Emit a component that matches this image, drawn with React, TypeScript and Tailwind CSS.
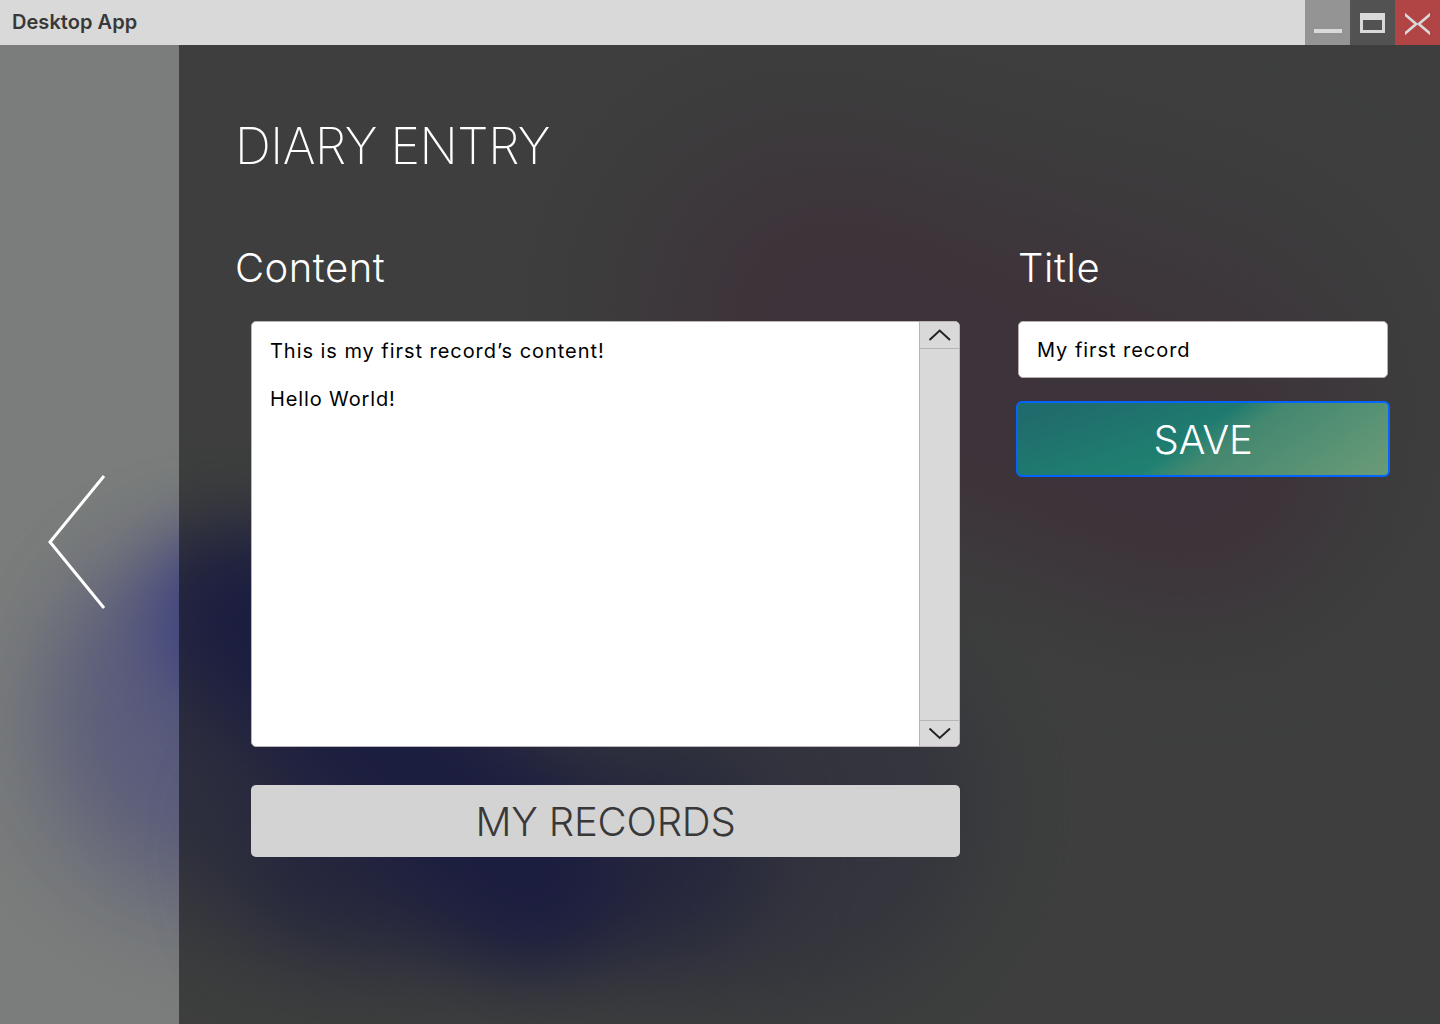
import React from "react";

function Backdrop() {
  return (
    <div className="absolute inset-0 overflow-hidden bg-[#7a7d7b]">
      <div className="absolute left-[590px] top-[150px] h-[400px] w-[800px] rotate-[14deg] rounded-full bg-[#7a7078] blur-[65px]" />
      <div className="absolute left-[690px] top-[265px] h-[260px] w-[650px] rotate-[22deg] rounded-full bg-[#7b6674] blur-[50px]" />
      <div className="absolute left-[30px] top-[580px] h-[380px] w-[950px] rotate-[7deg] rounded-full bg-[#66687a] blur-[52px]" />
      <div className="absolute left-[75px] top-[545px] h-[310px] w-[320px] rounded-full bg-[#595b7b] blur-[42px]" />
      <div className="absolute left-[240px] top-[760px] h-[190px] w-[520px] rounded-full bg-[#4a4d79] blur-[42px]" />
      <div className="absolute left-[115px] top-[662px] h-[170px] w-[550px] rotate-[42deg] rounded-full bg-[#383c80] blur-[36px]" />
    </div>
  );
}

function TitleBar() {
  return (
    <header className="relative flex h-[45px] shrink-0 items-center bg-[#d9d9d9]">
      <h1 className="flex-1 pb-px pl-3 text-[20px] leading-[43px] font-semibold tracking-[0.05px] text-[#383838]">Desktop App</h1>
      <button aria-label="Minimize" className="flex size-[45px] items-end justify-center bg-[#949494] pb-3">
        <span className="h-1 w-7 bg-[#d9d9d9]" />
      </button>
      <button aria-label="Maximize" className="flex size-[45px] items-center justify-center bg-[#525252]">
        <span className="h-5 w-[25px] border-[3px] border-t-[7px] border-[#d9d9d9]" />
      </button>
      <button aria-label="Close" className="flex size-[45px] items-center justify-center bg-[#b14545]">
        <svg className="mt-[3px] h-[22px] w-[25px]" viewBox="0 0 25 22" fill="none" stroke="#d9d9d9" strokeWidth="2.6">
          <path d="M-1 0.6L11.2 11L-1 21.4M26 0.6L13.8 11L26 21.4" />
        </svg>
      </button>
    </header>
  );
}

function ScrollButton({ down = false }: { down?: boolean }) {
  return (
    <button
      aria-label={down ? "Scroll down" : "Scroll up"}
      className={down ? "flex h-[25px] items-center justify-center" : "flex h-[26px] items-center justify-center"}
    >
      <svg className="mr-px h-3 w-[23px]" viewBox="0 0 23 12" fill="none" stroke="#222" strokeWidth="2">
        <path d={down ? "M1.5 0.5L11.7 10L22 0.5" : "M1.5 11L11.7 1.5L22 11"} />
      </svg>
    </button>
  );
}

export default function App() {
  return (
    <div className="relative flex h-[1024px] w-[1440px] flex-col overflow-hidden font-['Inter',sans-serif]">
      <Backdrop />
      <TitleBar />
      <div className="relative flex flex-1">
        <aside className="w-[179px] shrink-0 pt-[429px] pl-[47px]">
          <button aria-label="Back" className="block">
            <svg className="h-[136px] w-[60px]" viewBox="0 0 60 136" fill="none" stroke="#fff" strokeWidth="3">
              <path d="M57 2L3 68L57 134" />
            </svg>
          </button>
        </aside>
        <main className="flex-1 bg-black/50 pt-[71px] pl-[56px]">
          <h2 className="text-[50px] leading-[60px] font-extralight tracking-[-0.45px] text-white">DIARY ENTRY</h2>
          <div className="mt-[67px] flex gap-[58px]">
            <section className="w-[725px]">
              <h3 className="text-[40px] leading-[50px] font-light tracking-[0.5px] text-white">Content</h3>
              <div className="mt-[28px] ml-[16px] flex h-[426px] w-[709px] overflow-hidden rounded-[5px] border border-[#b9b4b7] bg-white">
                <div className="flex-1 pt-[17px] pl-[18px] text-[20px] leading-6 tracking-[0.95px] text-black">
                  <p>This is my first record’s content!</p>
                  <p className="mt-6 tracking-[0.88px]">Hello World!</p>
                </div>
                <div className="flex w-10 flex-col border-l border-[#b5b5b5] bg-[#d9d9d9]">
                  <ScrollButton />
                  <div className="flex-1 border-y border-[#b5b5b5]" />
                  <ScrollButton down />
                </div>
              </div>
              <button className="mt-[38px] ml-[16px] h-[72px] w-[709px] rounded-[5px] bg-[#d3d3d3] pt-px text-[40px] leading-[72px] font-light tracking-[-0.2px] text-[#383838]">
                MY RECORDS
              </button>
            </section>
            <section className="w-[374px]">
              <h3 className="text-[40px] leading-[50px] font-light tracking-[0.6px] text-white">Title</h3>
              <div className="mt-[28px] flex h-[57px] w-[370px] items-center rounded-[5px] border border-[#b9adb2] bg-white pl-[18px] text-[20px] tracking-[0.95px] text-black">
                My first record
              </div>
              <button className="mt-[23px] -ml-[2px] h-[76px] w-[374px] rounded-[6px] border-2 border-[#0066ff] bg-[linear-gradient(145deg,transparent_47%,#448870_57%,#6b9b78_100%),linear-gradient(162deg,#206c6c_10%,#1f8572_65%)] pt-0.5 text-[40px] leading-[70px] font-light tracking-[-0.3px] text-white">
                SAVE
              </button>
            </section>
          </div>
        </main>
      </div>
    </div>
  );
}
